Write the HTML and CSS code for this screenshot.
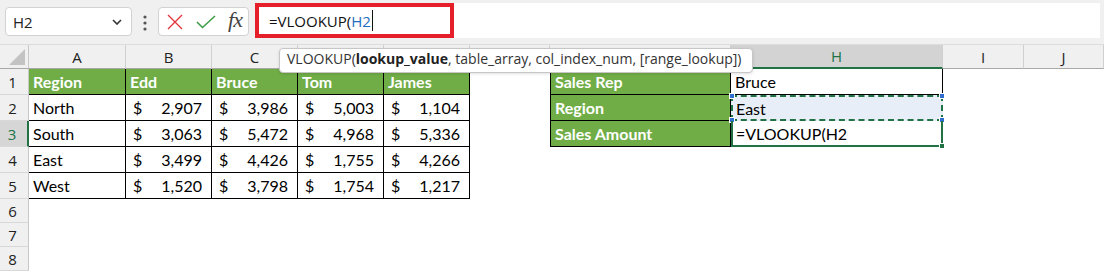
FILE: index.html
```html
<!DOCTYPE html>
<html lang="en">
<head>
    <meta charset="UTF-8">
    <meta name="viewport" content="width=device-width, initial-scale=1.0">
    <title>VLOOKUP - Sales Rep</title>
    <link rel="stylesheet" href="styles.css">
</head>
<body>
    <div class="topbar">
        <div class="namebox">
            <span>H2</span>
            <svg width="10" height="6" viewBox="0 0 10 6"><path d="M1 1l4 4 4-4" fill="none" stroke="#333" stroke-width="1.6"/></svg>
        </div>
        <div class="dots">
            <svg width="4" height="16" viewBox="0 0 4 16"><circle cx="2" cy="2" r="1.6"/><circle cx="2" cy="8" r="1.6"/><circle cx="2" cy="14" r="1.6"/></svg>
        </div>
        <div class="fxbox">
            <svg width="16" height="16" viewBox="0 0 16 16"><path d="M1 1L15 15M15 1L1 15" stroke="#e2373f" stroke-width="1.4" fill="none"/></svg>
            <svg width="20" height="14" viewBox="0 0 20 14"><path d="M1 7l5.5 5.5L19 1" stroke="#3b9b45" stroke-width="1.5" fill="none"/></svg>
            <span class="fx">fx</span>
        </div>
        <div class="formula">
            <div class="hl">=VLOOKUP(<span class="ref">H2</span><span class="caret"></span></div>
        </div>
    </div>

    <div class="sheet">
        <div class="row head">
            <div class="corner"><svg width="16" height="16" viewBox="0 0 16 16"><path d="M16 0V16H0Z" fill="#c3c3c3"/></svg></div>
            <div class="ch">A</div><div class="ch">B</div><div class="ch">C</div><div class="ch">D</div><div class="ch">E</div>
            <div class="ch">F</div><div class="ch">G</div><div class="ch sel">H</div><div class="ch">I</div><div class="ch">J</div>
        </div>

        <div class="row">
            <div class="rh">1</div>
            <div class="c t g">Region</div><div class="c t g">Edd</div><div class="c t g">Bruce</div><div class="c t g">Tom</div><div class="c t g">James</div>
            <div class="c"></div>
            <div class="c t g first">Sales Rep</div><div class="c t">Bruce</div>
        </div>
        <div class="row">
            <div class="rh">2</div>
            <div class="c t">North</div>
            <div class="c t money"><span>$</span><span>2,907</span></div>
            <div class="c t money"><span>$</span><span>3,986</span></div>
            <div class="c t money"><span>$</span><span>5,003</span></div>
            <div class="c t money"><span>$</span><span>1,104</span></div>
            <div class="c"></div>
            <div class="c t g first">Region</div>
            <div class="c ants">East
                <i class="knob tl"></i><i class="knob tr"></i><i class="knob bl"></i><i class="knob br"></i>
            </div>
        </div>
        <div class="row">
            <div class="rh sel">3</div>
            <div class="c t">South</div>
            <div class="c t money"><span>$</span><span>3,063</span></div>
            <div class="c t money"><span>$</span><span>5,472</span></div>
            <div class="c t money"><span>$</span><span>4,968</span></div>
            <div class="c t money"><span>$</span><span>5,336</span></div>
            <div class="c"></div>
            <div class="c t g first">Sales Amount</div>
            <div class="c active">=VLOOKUP(H2<i class="fill"></i></div>
        </div>
        <div class="row">
            <div class="rh">4</div>
            <div class="c t">East</div>
            <div class="c t money"><span>$</span><span>3,499</span></div>
            <div class="c t money"><span>$</span><span>4,426</span></div>
            <div class="c t money"><span>$</span><span>1,755</span></div>
            <div class="c t money"><span>$</span><span>4,266</span></div>
        </div>
        <div class="row">
            <div class="rh">5</div>
            <div class="c t">West</div>
            <div class="c t money"><span>$</span><span>1,520</span></div>
            <div class="c t money"><span>$</span><span>3,798</span></div>
            <div class="c t money"><span>$</span><span>1,754</span></div>
            <div class="c t money"><span>$</span><span>1,217</span></div>
        </div>
        <div class="row short"><div class="rh">6</div></div>
        <div class="row short"><div class="rh">7</div></div>
        <div class="row short"><div class="rh">8</div></div>

        <div class="tip">VLOOKUP(<b>lookup_value</b>, table_array, col_index_num, [range_lookup])</div>
    </div>
</body>
</html>
```

FILE: styles.css
```css
* { margin: 0; padding: 0; box-sizing: border-box; }
body {
    width: 1104px;
    height: 272px;
    overflow: hidden;
    background: #fff;
    font-family: 'Lato', sans-serif;
}

/* formula bar */
.topbar {
    display: flex;
    align-items: flex-start;
    height: 45px;
    padding-left: 5px;
    background: #f0f0f0;
    border-bottom: 1px solid #dcdcdc;
}
.namebox, .fxbox {
    margin-top: 7px;
    height: 29px;
    background: #fff;
    border: 1px solid #d2d2d2;
    border-radius: 4px;
    display: flex;
    align-items: center;
}
.namebox {
    width: 127px;
    padding: 0 9px 0 7px;
    justify-content: space-between;
    font: 15px 'Open Sans', sans-serif;
    color: #222;
}
.dots {
    width: 26px;
    height: 45px;
    display: flex;
    align-items: center;
    justify-content: center;
    fill: #555;
}
.fxbox {
    width: 91px;
    padding: 0 6px 0 8px;
    justify-content: space-between;
}
.fx {
    font: italic 22px 'Liberation Serif', serif;
    color: #444;
    letter-spacing: -1px;
    margin-top: -3px;
}
.formula {
    flex: 1;
    margin: 3px 4px 0 6px;
    height: 35px;
    background: #fff;
}
.hl {
    width: 199px;
    height: 35px;
    border: 4px solid #e5202a;
    padding-left: 10px;
    display: flex;
    align-items: center;
    font: 15px 'Open Sans', sans-serif;
    color: #111;
}
.ref { color: #1f6fc0; }
.caret {
    width: 1px;
    height: 21px;
    margin-left: 1px;
    background: #111;
}

/* grid */
.sheet { position: relative; }
.row {
    display: grid;
    grid-template-columns: 29px 97px 86px 86px 86px 86px 80px 181px 212px 81px 80px;
    height: 26px;
}
.row.short { height: 24px; }
.row.head { height: 24px; background: #f0f0f0; }

.corner {
    display: flex;
    align-items: flex-end;
    justify-content: flex-end;
    padding: 0 3px 3px 0;
    border-right: 1px solid #c8c8c8;
    border-bottom: 1px solid #a8a8a8;
}
.ch {
    display: flex;
    align-items: center;
    justify-content: center;
    font: 15px 'Open Sans', sans-serif;
    color: #222;
    border-right: 1px solid #d0d0d0;
    border-bottom: 1px solid #a8a8a8;
}
.ch.sel {
    background: #d3d3d3;
    color: #217346;
    border-bottom: 2px solid #217346;
}
.rh {
    display: flex;
    align-items: center;
    justify-content: center;
    padding-right: 3px;
    background: #f0f0f0;
    font: 15px 'Open Sans', sans-serif;
    color: #222;
    border-right: 1px solid #c8c8c8;
    border-bottom: 1px solid #d8d8d8;
}
.rh.sel {
    background: #d6d6d6;
    color: #217346;
    border-right: 2px solid #217346;
}

.c {
    display: flex;
    align-items: center;
    padding: 0 4px;
    font-size: 16px;
    color: #000;
    white-space: nowrap;
}
.t {
    border-right: 1px solid #000;
    border-bottom: 1px solid #000;
}
.first { border-left: 1px solid #000; }
.g {
    background: #70ad47;
    color: #fff;
    font-weight: bold;
}
.money {
    justify-content: space-between;
    padding: 0 9px 0 7px;
}

.ants {
    position: relative;
    background: #e8eef8;
    border: 2px dashed #217346;
    padding-left: 3px;
}
.knob {
    position: absolute;
    width: 6px;
    height: 6px;
    background: #2f6fd0;
    border: 1px solid #fff;
}
.knob.tl { left: -4px; top: -4px; }
.knob.tr { right: -4px; top: -4px; }
.knob.bl { left: -4px; bottom: -4px; }
.knob.br { right: -4px; bottom: -4px; }

.active {
    position: relative;
    border: 2px solid #217346;
    border-top: none;
    padding-left: 3px;
}
.fill {
    position: absolute;
    right: -4px;
    bottom: -4px;
    width: 6px;
    height: 6px;
    background: #217346;
    border: 1px solid #fff;
}

.tip {
    position: absolute;
    left: 279px;
    top: 3px;
    width: 474px;
    height: 25px;
    padding-left: 7px;
    line-height: 23px;
    background: #fff;
    border: 1px solid #c6c6c6;
    border-radius: 4px;
    box-shadow: 0 1px 3px rgba(0, 0, 0, 0.12);
    font: 14px 'Open Sans', sans-serif;
    color: #333;
    white-space: nowrap;
}
.tip b { font-weight: bold; color: #222; }
```
